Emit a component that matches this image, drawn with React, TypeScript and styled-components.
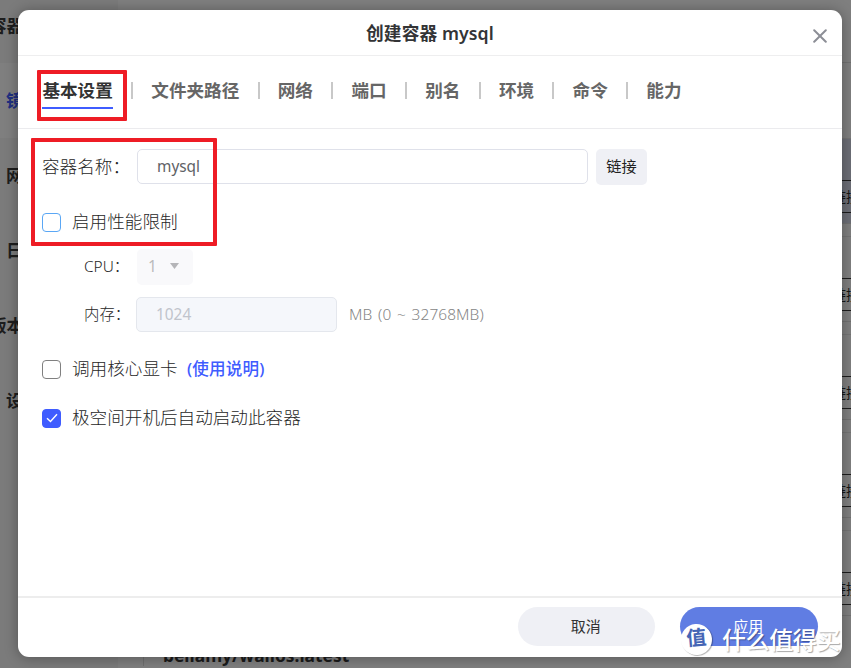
import React from "react";
import styled, { createGlobalStyle } from "styled-components";

const Global = createGlobalStyle`
  * { box-sizing: border-box; }
  body { margin: 0; overflow: hidden; }
  body, button, input { font-family: "Noto Sans", "Noto Sans CJK SC", sans-serif; }
`;

const Screen = styled.div`
  position: relative;
  width: 851px;
  height: 668px;
  overflow: hidden;
  display: flex;
  background: #7f7f7f;
`;

/* Page behind the dialog */
const Sidebar = styled.nav`
  width: 118px;
  flex: none;
  background: #7b7b7b;
  margin-top: -12px;
  height: 680px;
`;

const SideItem = styled.div<{ $active?: boolean; $shift?: number }>`
  height: 75px;
  padding-left: 6px;
  line-height: 75px;
  font-size: 17.6px;
  font-weight: 700;
  white-space: nowrap;
  text-indent: ${(p) => p.$shift ?? 0}px;
  color: ${(p) => (p.$active ? "#202f80" : "#1d1d1d")};
  background: ${(p) => (p.$active ? "#7f7f7f" : "transparent")};
`;

const Main = styled.main`
  flex: 1;
  display: flex;
  flex-direction: column;
`;

const MainHeader = styled.div`
  height: 63px;
  flex: none;
  border-bottom: 1px solid #717171;
`;

const List = styled.div`
  height: 580px;
  flex: none;
  padding-top: 75px;
  display: flex;
  flex-direction: column;
  gap: 12px;
`;

const ListRow = styled.div<{ $selected?: boolean }>`
  height: 86px;
  flex: none;
  display: flex;
  justify-content: flex-end;
  align-items: flex-end;
  padding-bottom: 10px;
  border-top: 1px solid #747474;
  border-bottom: 1px solid #717171;
  background: ${(p) => (p.$selected ? "#6c6e76" : "transparent")};
`;

const RowButton = styled.div`
  width: 32px;
  height: 33px;
  border: solid #1c1c1c;
  border-width: 1px 0;
  padding-left: 13px;
  font-size: 14px;
  line-height: 31px;
  white-space: nowrap;
  overflow: hidden;
  color: #161616;
`;

const ImageName = styled.div`
  margin-left: 25px;
  padding-left: 19px;
  height: 26px;
  margin-top: -3px;
  border-left: 1px solid #6f6f6f;
  font-size: 17.4px;
  font-weight: 700;
  line-height: 31px;
  color: #1b1b1b;
`;

/* Dialog */
const Dialog = styled.section`
  position: absolute;
  left: 18px;
  top: 10px;
  width: 824px;
  height: 647px;
  border-radius: 11px;
  background: #fff;
  box-shadow: 0 1px 14px rgba(0, 0, 0, 0.32);
  display: flex;
  flex-direction: column;
`;

const DialogHeader = styled.header`
  height: 46px;
  flex: none;
  display: grid;
  grid-template-columns: 44px 1fr 44px;
  align-items: center;
  border-bottom: 1px solid #eeeeef;
`;

const Title = styled.h1`
  grid-column: 2;
  margin: 0;
  font-size: 17.7px;
  line-height: 24px;
  font-weight: 600;
  letter-spacing: 0.1px;
  text-align: center;
  color: #333436;
`;

const CloseButton = styled.button`
  border: 0;
  padding: 7px 0 0;
  background: none;
  display: flex;
  justify-content: center;
`;

const Tabs = styled.nav`
  height: 73px;
  flex: none;
  display: flex;
  align-items: flex-start;
  gap: 18.26px;
  padding: 22px 24.4px 0;
  border-bottom: 1px solid #ebebee;
`;

const Tab = styled.div<{ $active?: boolean }>`
  height: 31px;
  font-size: 17.6px;
  line-height: 24px;
  font-weight: 700;
  white-space: nowrap;
  color: ${(p) => (p.$active ? "#333" : "#666")};
  border-bottom: 2px solid ${(p) => (p.$active ? "#3f5cff" : "transparent")};
`;

const Divider = styled.i`
  width: 2px;
  height: 17px;
  margin-top: 4px;
  flex: none;
  background: #c8c8c8;
`;

const Form = styled.div`
  flex: 1;
  padding: 20px 24px 0;
  color: #262626;
`;

const Row = styled.div<{ $h: number; $gap?: number; $indent?: number }>`
  display: flex;
  align-items: center;
  height: ${(p) => p.$h}px;
  margin-top: ${(p) => p.$gap ?? 0}px;
  padding-left: ${(p) => p.$indent ?? 0}px;
`;

const Label = styled.label<{ $w: number; $small?: boolean }>`
  width: ${(p) => p.$w}px;
  flex: none;
  font-size: ${(p) => (p.$small ? 15.4 : 17.6)}px;
  font-weight: 300;
  line-height: 24px;
  padding-bottom: ${(p) => (p.$small ? 0 : 2)}px;
  white-space: nowrap;
`;

const Input = styled.input<{ $w: number }>`
  width: ${(p) => p.$w}px;
  height: 35px;
  margin-bottom: 1px;
  border: 1px solid #dfe1ea;
  border-radius: 5px;
  padding: 0 19px 1px;
  outline: none;
  background: #fff;
  font-size: 15.4px;
  color: #606266;
  &:disabled {
    background: #f5f7fb;
    border-color: #e4e7ed;
    color: #c0c4cc;
  }
`;

const LinkButton = styled.button`
  width: 51px;
  height: 36px;
  margin-left: 8px;
  padding: 0 0 4px;
  border: 0;
  border-radius: 5px;
  background: #eff0f5;
  color: #222;
  font-size: 15.2px;
`;

const Select = styled.div`
  width: 56px;
  height: 36px;
  display: flex;
  align-items: center;
  gap: 13px;
  padding: 0 0 2px 11px;
  border-radius: 5px;
  background: #f9f9fb;
  color: #bbb;
  font-size: 15.4px;
`;

const Unit = styled.span`
  margin-left: 12px;
  padding-bottom: 2px;
  font-size: 15.4px;
  font-weight: 300;
  letter-spacing: 0.1px;
  word-spacing: 1.6px;
  color: #858585;
`;

const Checkbox = styled.span<{ $tone: string; $checked?: boolean }>`
  width: 19px;
  height: 19px;
  flex: none;
  margin-right: 11px;
  display: flex;
  align-items: center;
  justify-content: center;
  border-radius: 4px;
  border: 1px solid ${(p) => p.$tone};
  background: ${(p) => (p.$checked ? p.$tone : "#fff")};
`;

const Help = styled.a`
  margin-left: 9px;
  padding-bottom: 2px;
  font-size: 16.6px;
  letter-spacing: 0.15px;
  font-weight: 500;
  color: #3f5cff;
`;

const Footer = styled.footer`
  height: 61px;
  flex: none;
  display: flex;
  justify-content: flex-end;
  gap: 25px;
  padding: 9px 24.5px 0 0;
  border-top: 2px solid #ededed;
`;

const FooterButton = styled.button<{ $primary?: boolean }>`
  width: 137.5px;
  height: 39px;
  padding: 0 1px 2px 0;
  border: 0;
  border-radius: 20px;
  font-size: 15px;
  color: ${(p) => (p.$primary ? "#fff" : "#333")};
  background: ${(p) => (p.$primary ? "#607de3" : "#eff0f5")};
`;

/* Marker frames and watermark lie over the dialog */
const Marker = styled.div<{ $x: number; $y: number; $w: number; $h: number }>`
  position: absolute;
  left: ${(p) => p.$x}px;
  top: ${(p) => p.$y}px;
  width: ${(p) => p.$w}px;
  height: ${(p) => p.$h}px;
  border: 4px solid #ee1c25;
  border-radius: 1px;
`;

const Watermark = styled.div`
  position: absolute;
  left: 681px;
  top: 624px;
  display: flex;
  align-items: center;
  gap: 10px;
  white-space: nowrap;
`;

const Seal = styled.span`
  width: 31px;
  height: 31px;
  border-radius: 50%;
  background: #fff;
  box-shadow: 1px 1px 1px rgba(0, 0, 0, 0.3);
  color: #4565b5;
  font-size: 20px;
  line-height: 28px;
  font-weight: 600;
  text-align: center;
  transform: rotate(-5deg);
`;

const Brand = styled.span`
  font-size: 24px;
  line-height: 31px;
  font-weight: 500;
  letter-spacing: -0.4px;
  color: #fff;
  text-shadow: 1px 1px 1px rgba(0, 0, 0, 0.34);
`;

const tabs = ["基本设置", "文件夹路径", "网络", "端口", "别名", "环境", "命令", "能力"];

export default function App() {
  return (
    <Screen>
      <Global />
      <Sidebar>
        <SideItem $shift={-17}>容器</SideItem>
        <SideItem $active>镜像</SideItem>
        <SideItem>网络</SideItem>
        <SideItem>日志</SideItem>
        <SideItem $shift={-17}>版本</SideItem>
        <SideItem>设置</SideItem>
      </Sidebar>
      <Main>
        <MainHeader />
        <List>
          {[0, 1, 2, 3, 4].map((n) => (
            <ListRow key={n} $selected={n === 0}>
              <RowButton>链接</RowButton>
            </ListRow>
          ))}
        </List>
        <ImageName>bellamy/wallos:latest</ImageName>
      </Main>

      <Dialog>
        <DialogHeader>
          <Title>创建容器 mysql</Title>
          <CloseButton aria-label="关闭">
            <svg width="14" height="14" viewBox="0 0 14 14" fill="none" stroke="#8c8e96" strokeWidth="2" strokeLinecap="round">
              <path d="M1.2 1.2 12.8 12.8M12.8 1.2 1.2 12.8" />
            </svg>
          </CloseButton>
        </DialogHeader>
        <Tabs>
          {tabs.map((t, i) => (
            <React.Fragment key={t}>
              {i > 0 && <Divider />}
              <Tab $active={i === 0}>{t}</Tab>
            </React.Fragment>
          ))}
        </Tabs>
        <Form>
          <Row $h={36}>
            <Label $w={95}>容器名称：</Label>
            <Input $w={451} defaultValue="mysql" />
            <LinkButton>链接</LinkButton>
          </Row>
          <Row $h={26} $gap={24}>
            <Checkbox $tone="#5aa7f5" />
            <Label $w={120}>启用性能限制</Label>
          </Row>
          <Row $h={36} $gap={14} $indent={42}>
            <Label $w={53} $small>CPU：</Label>
            <Select>
              1
              <svg width="9" height="6" viewBox="0 0 9 6" fill="#b5b5b8">
                <path d="M0 0h9L4.5 6z" />
              </svg>
            </Select>
          </Row>
          <Row $h={36} $gap={12} $indent={42}>
            <Label $w={52} $small>内存：</Label>
            <Input $w={201} defaultValue="1024" disabled />
            <Unit>MB (0 ~ 32768MB)</Unit>
          </Row>
          <Row $h={26} $gap={23}>
            <Checkbox $tone="#808080" />
            <Label $w={106}>调用核心显卡</Label>
            <Help>(使用说明)</Help>
          </Row>
          <Row $h={26} $gap={23}>
            <Checkbox $tone="#3f5cff" $checked>
              <svg width="12" height="10" viewBox="0 0 12 10" fill="none" stroke="#fff" strokeWidth="1.4">
                <path d="M1 5.2 4.5 8.5 11 1.2" />
              </svg>
            </Checkbox>
            <Label $w={240}>极空间开机后自动启动此容器</Label>
          </Row>
        </Form>
        <Footer>
          <FooterButton>取消</FooterButton>
          <FooterButton $primary>应用</FooterButton>
        </Footer>
      </Dialog>

      <Marker $x={37} $y={70} $w={90} $h={51} />
      <Marker $x={31} $y={138} $w={186} $h={108} />
      <Watermark>
        <Seal>值</Seal>
        <Brand>什么值得买</Brand>
      </Watermark>
    </Screen>
  );
}
